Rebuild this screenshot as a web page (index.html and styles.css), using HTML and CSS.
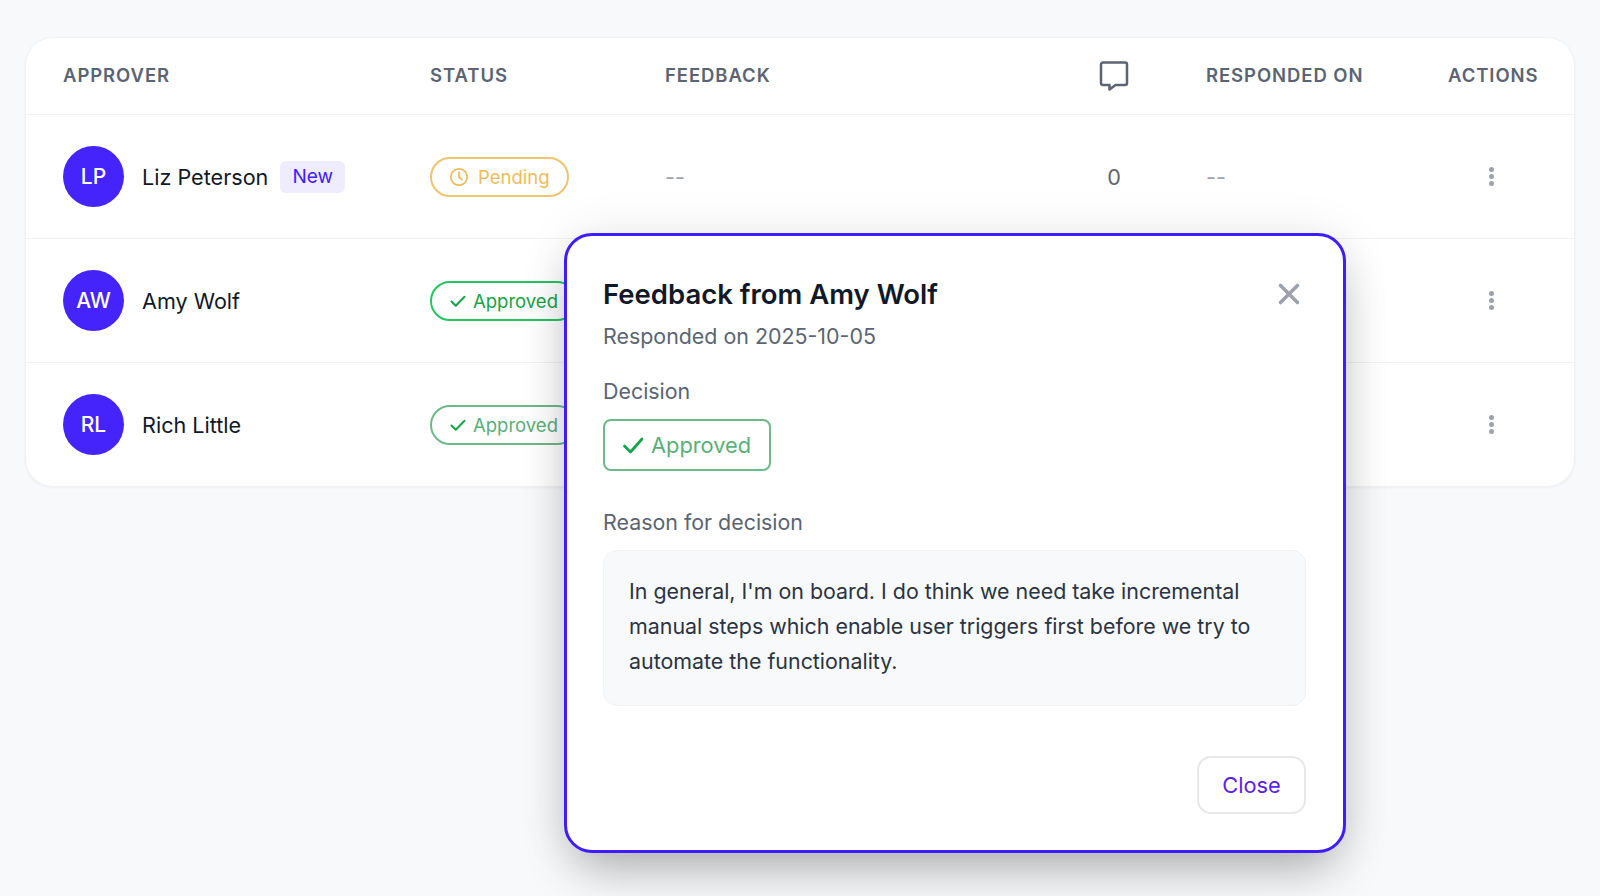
FILE: index.html
```html
<!DOCTYPE html>
<html>
<head>
  <title>Approvers</title>
  <link rel="stylesheet" href="styles.css">
</head>
<body>
  <div class="approverCard">
    <div class="tableRow tableHead">
      <div>APPROVER</div>
      <div>STATUS</div>
      <div>FEEDBACK</div>
      <div class="countCell">
        <svg class="commentIcon" width="30" height="32" viewBox="0 0 30 32" fill="none" stroke="#5b6472" stroke-width="2.500" stroke-linejoin="round">
          <path d="M4 2.500h22a2 2 0 0 1 2 2v18.500a2 2 0 0 1-2 2H16.500L10.500 29.500V25H4a2 2 0 0 1-2-2v-18.500a2 2 0 0 1 2-2z"/>
        </svg>
      </div>
      <div class="respondedCell">RESPONDED ON</div>
      <div>ACTIONS</div>
    </div>

    <div class="tableRow">
      <div class="person">
        <span class="avatar">LP</span>
        <span class="personName">Liz Peterson</span>
        <span class="newTag">New</span>
      </div>
      <div>
        <span class="pill pending">
          <svg width="20" height="20" viewBox="0 0 20 20" fill="none" stroke="#eebc5c" stroke-width="1.800" stroke-linecap="round" stroke-linejoin="round">
            <circle cx="10" cy="10" r="8.200"/>
            <path d="M10 5.200V10l3 2.600"/>
          </svg>
          Pending
        </span>
      </div>
      <div class="emptyValue">--</div>
      <div class="countCell countValue">0</div>
      <div class="respondedCell emptyValue">--</div>
      <div class="actionsCell"><span class="dots"><i></i><i></i><i></i></span></div>
    </div>

    <div class="tableRow">
      <div class="person">
        <span class="avatar">AW</span>
        <span class="personName">Amy Wolf</span>
      </div>
      <div>
        <span class="pill approved">
          <svg width="18" height="18" viewBox="0 0 18 18" fill="none" stroke="#16a34a" stroke-width="2" stroke-linecap="round" stroke-linejoin="round">
            <path d="M2.500 9.500l4.300 4.300L15.500 4.800"/>
          </svg>
          Approved
        </span>
      </div>
      <div></div>
      <div></div>
      <div></div>
      <div class="actionsCell"><span class="dots"><i></i><i></i><i></i></span></div>
    </div>

    <div class="tableRow">
      <div class="person">
        <span class="avatar">RL</span>
        <span class="personName">Rich Little</span>
      </div>
      <div>
        <span class="pill approved faded">
          <svg width="18" height="18" viewBox="0 0 18 18" fill="none" stroke="#16a34a" stroke-width="2" stroke-linecap="round" stroke-linejoin="round">
            <path d="M2.500 9.500l4.300 4.300L15.500 4.800"/>
          </svg>
          Approved
        </span>
      </div>
      <div></div>
      <div></div>
      <div></div>
      <div class="actionsCell"><span class="dots"><i></i><i></i><i></i></span></div>
    </div>
  </div>

  <div class="feedbackModal">
    <div class="modalHead">
      <h2>Feedback from Amy Wolf</h2>
      <svg class="closeIcon" width="24" height="24" viewBox="0 0 24 24" fill="none" stroke="#9ca1ab" stroke-width="3.600" stroke-linecap="round">
        <path d="M3.500 3.500l17 17M20.500 3.500l-17 17"/>
      </svg>
    </div>
    <div class="modalSub">Responded on 2025-10-05</div>
    <div class="fieldLabel">Decision</div>
    <div class="decisionBox">
      <svg width="24" height="24" viewBox="0 0 24 24" fill="none" stroke="#16a34a" stroke-width="2.800" stroke-linecap="round" stroke-linejoin="round">
        <path d="M3.500 13l6 6L21 6"/>
      </svg>
      Approved
    </div>
    <div class="fieldLabel reasonLabel">Reason for decision</div>
    <div class="reasonBox">In general, I'm on board. I do think we need take incremental manual steps which enable user triggers first before we try to automate the functionality.</div>
    <div class="modalFoot">
      <button class="closeButton">Close</button>
    </div>
  </div>
</body>
</html>
```

FILE: styles.css
```css
* {
  box-sizing: border-box;
}
body {
  margin: 0;
  height: 896px;
  padding: 37px 25px 0;
  overflow: hidden;
  background-color: #f8f9fb;
  font-family: Inter, "Liberation Sans", sans-serif;
  color: #111827;
}
.approverCard {
  background-color: #fff;
  border: 1px solid #f1f2f4;
  border-radius: 28px;
  box-shadow: 0 1px 3px rgba(17, 24, 39, .05);
}
.tableRow {
  display: grid;
  grid-template-columns: 367px 235px 409px 80px 294px 1fr;
  align-items: center;
  height: 124px;
  padding: 0 37px;
  border-top: 1px solid #f1f2f4;
  font-size: 21.6px;
}
.tableHead {
  height: 76px;
  padding-bottom: 2px;
  border-top: none;
  font-size: 18.5px;
  font-weight: 600;
  letter-spacing: .05em;
  color: #5b6472;
}
.countCell {
  display: flex;
  justify-content: center;
}
.commentIcon {
  display: block;
  margin-top: 2px;
}
.countValue {
  color: #5b6472;
}
.respondedCell {
  padding-left: 52px;
}
.emptyValue {
  color: #9ca1ab;
}
.actionsCell {
  display: flex;
  padding-left: 41px;
}
.dots {
  display: flex;
  flex-direction: column;
  gap: 2px;
}
.dots i {
  width: 5px;
  height: 5px;
  border-radius: 50%;
  background-color: #9ca1ab;
}
.person {
  display: flex;
  align-items: center;
}
.avatar {
  display: flex;
  align-items: center;
  justify-content: center;
  width: 61px;
  height: 61px;
  margin-right: 18px;
  border-radius: 50%;
  background-color: #4524fb;
  color: #fff;
  font-size: 21px;
  font-weight: 500;
}
.newTag {
  margin-left: 12px;
  padding: 5px 12px;
  border-radius: 6px;
  background-color: #efecfe;
  color: #3d1cff;
  font-size: 19px;
  line-height: 22px;
}
.pill {
  display: inline-flex;
  align-items: center;
  gap: 6px;
  height: 40px;
  padding: 0 17px;
  border: 2px solid;
  border-radius: 20px;
  font-size: 18.5px;
  white-space: nowrap;
}
.pending {
  gap: 9px;
  border-color: #f0c36d;
  color: #eebc5c;
}
.approved {
  border-color: #22c55e;
  color: #16a34a;
}
.faded {
  border-color: #6cb98a;
  color: #5aaf78;
}
.feedbackModal {
  position: absolute;
  left: 564px;
  top: 233px;
  width: 782px;
  height: 620px;
  padding: 36px 37px 36px 36px;
  background-color: #fff;
  border: 3px solid #3d1cff;
  border-radius: 28px;
  box-shadow: 0 25px 50px -12px rgba(0, 0, 0, .3), 0 0 50px rgba(0, 0, 0, .08);
}
.modalHead {
  display: flex;
  align-items: center;
  justify-content: space-between;
}
.modalHead h2 {
  margin: 0;
  font-size: 27.500px;
  line-height: 44px;
  font-weight: 600;
  color: #111827;
}
.closeIcon {
  margin-right: 5px;
}
.modalSub {
  margin-top: 4px;
  font-size: 21.400px;
  line-height: 32px;
  color: #5b6472;
}
.fieldLabel {
  font-size: 21.400px;
  line-height: 32px;
  color: #5b6472;
}
.modalSub + .fieldLabel {
  margin-top: 23px;
}
.decisionBox {
  display: inline-flex;
  align-items: center;
  gap: 6px;
  height: 52px;
  margin-top: 12px;
  padding: 0 18px 0 16px;
  border: 2px solid #6cb98a;
  border-radius: 8px;
  font-size: 21.800px;
  color: #5aaf78;
}
.reasonLabel {
  margin-top: 35px;
}
.reasonBox {
  height: 156px;
  margin-top: 12px;
  padding: 23px 25px;
  background-color: #f8f9fb;
  border: 1px solid #f1f2f4;
  border-radius: 14px;
  font-size: 21.400px;
  line-height: 35px;
  color: #2b3341;
}
.modalFoot {
  display: flex;
  justify-content: flex-end;
  margin-top: 50px;
}
.closeButton {
  width: 109px;
  height: 58px;
  background-color: #fff;
  border: 2px solid #e7e8eb;
  border-radius: 14px;
  font-family: inherit;
  font-size: 21.800px;
  color: #5b21e8;
}
```
